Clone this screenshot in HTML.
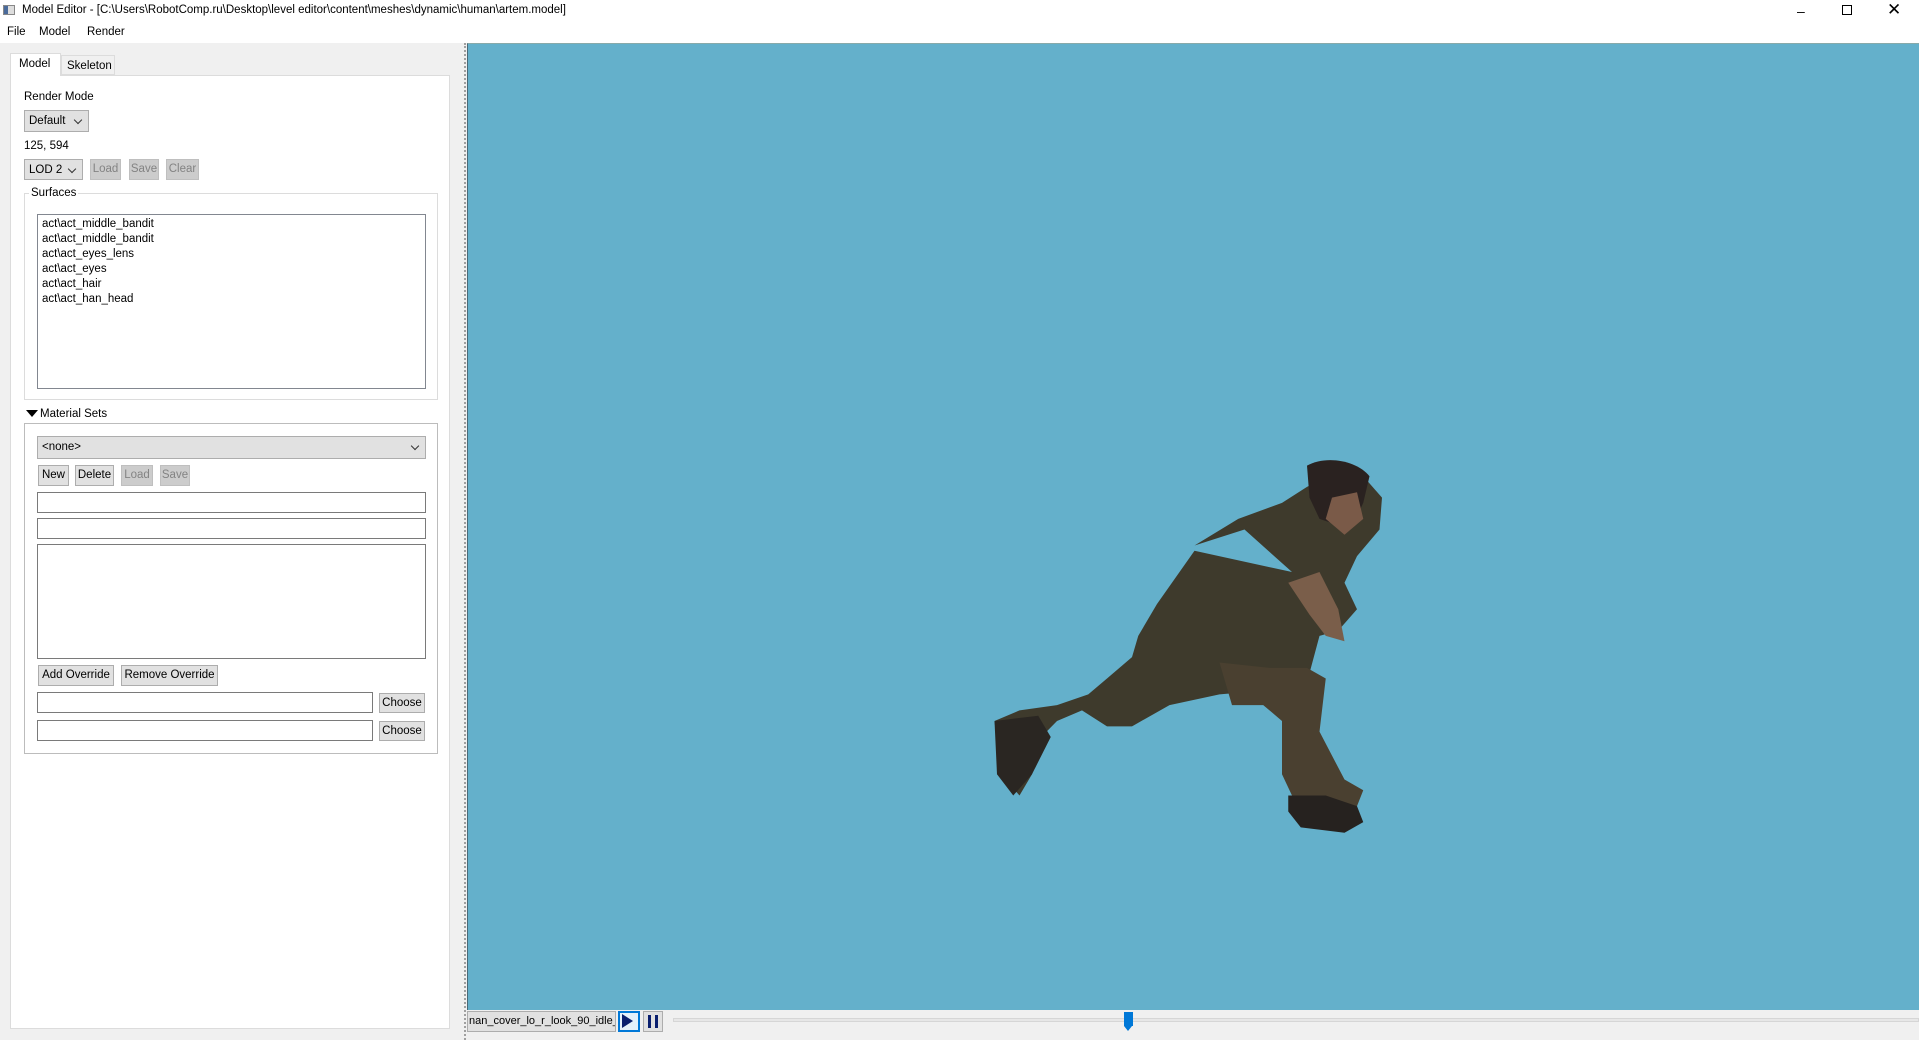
<!DOCTYPE html>
<html><head><style>
*{box-sizing:border-box;margin:0;padding:0}
body{width:1919px;height:1040px;background:#f0f0f0;font-family:"Liberation Sans",sans-serif;font-size:11.5px;color:#000;position:relative;overflow:hidden}
.a{position:absolute}
.btn{position:absolute;background:#e1e1e1;border:1px solid #adadad;text-align:center;line-height:19px}
.dis{background:#cccccc;border-color:#bfbfbf;color:#838383}
.inp{position:absolute;background:#fff;border:1px solid #7a7a7a}
.cb{position:absolute;background:#e1e1e1;border:1px solid #adadad;line-height:20px;padding-left:4px}
.cb:after{content:"";position:absolute;right:7px;top:6px;width:5px;height:5px;border-right:1px solid #333;border-bottom:1px solid #333;transform:rotate(45deg)}
.grp{position:absolute;border:1px solid #dcdcdc}
</style></head><body>
<div class="a" style="left:0;top:0;width:1919px;height:22px;background:#fff"></div>
<div class="a" style="left:3px;top:5px;width:12px;height:10px;border:1px solid #888;background:linear-gradient(90deg,#4a6a9a 40%,#ddd 40%)"></div>
<div class="a" style="left:22px;top:4px">Model Editor - [C:\Users\RobotComp.ru\Desktop\level editor\content\meshes\dynamic\human\artem.model]</div>
<div class="a" style="left:1797px;top:3px;font-size:14px">&#8211;</div>
<div class="a" style="left:1842px;top:5px;width:10px;height:10px;border:1px solid #000"></div>
<div class="a" style="left:1887px;top:0px;font-size:17px">&#10005;</div>
<div class="a" style="left:0;top:22px;width:1919px;height:21px;background:#fff"></div>
<div class="a" style="left:7px;top:26px">File</div>
<div class="a" style="left:39px;top:26px">Model</div>
<div class="a" style="left:87px;top:26px">Render</div>

<div class="a" style="left:10px;top:75px;width:440px;height:954px;background:#fff;border:1px solid #dcdcdc"></div>
<div class="a" style="left:10px;top:53px;width:51px;height:23px;background:#fff;border:1px solid #dcdcdc;border-bottom:none;padding:4px 0 0 8px">Model</div>
<div class="a" style="left:61px;top:55px;width:54px;height:20px;background:#f0f0f0;border:1px solid #dcdcdc;padding:4px 0 0 5px">Skeleton</div>

<div class="a" style="left:24px;top:91px">Render Mode</div>
<div class="cb" style="left:24px;top:110px;width:65px;height:22px">Default</div>
<div class="a" style="left:24px;top:140px">125, 594</div>
<div class="cb" style="left:24px;top:159px;width:59px;height:21px">LOD 2</div>
<div class="btn dis" style="left:90px;top:159px;width:31px;height:21px">Load</div>
<div class="btn dis" style="left:129px;top:159px;width:30px;height:21px">Save</div>
<div class="btn dis" style="left:166px;top:159px;width:33px;height:21px">Clear</div>

<div class="grp" style="left:24px;top:193px;width:414px;height:207px"></div>
<div class="a" style="left:29px;top:187px;background:#fff;padding:0 2px">Surfaces</div>
<div class="inp" style="left:37px;top:214px;width:389px;height:175px;border-color:#828790;padding:2px 4px;line-height:15px">act\act_middle_bandit<br>act\act_middle_bandit<br>act\act_eyes_lens<br>act\act_eyes<br>act\act_hair<br>act\act_han_head</div>

<div class="a" style="left:26px;top:410px;width:0;height:0;border-left:6px solid transparent;border-right:6px solid transparent;border-top:7px solid #000"></div>
<div class="a" style="left:40px;top:408px">Material Sets</div>
<div class="grp" style="left:24px;top:423px;width:414px;height:331px;border-color:#bcbcbc"></div>
<div class="cb" style="left:37px;top:436px;width:389px;height:23px;line-height:21px">&lt;none&gt;</div>
<div class="btn" style="left:38px;top:465px;width:31px;height:21px">New</div>
<div class="btn" style="left:75px;top:465px;width:39px;height:21px">Delete</div>
<div class="btn dis" style="left:121px;top:465px;width:32px;height:21px">Load</div>
<div class="btn dis" style="left:160px;top:465px;width:30px;height:21px">Save</div>
<div class="inp" style="left:37px;top:492px;width:389px;height:21px"></div>
<div class="inp" style="left:37px;top:518px;width:389px;height:21px"></div>
<div class="inp" style="left:37px;top:544px;width:389px;height:115px"></div>
<div class="btn" style="left:38px;top:665px;width:76px;height:21px">Add Override</div>
<div class="btn" style="left:121px;top:665px;width:97px;height:21px">Remove Override</div>
<div class="inp" style="left:37px;top:692px;width:336px;height:21px"></div>
<div class="btn" style="left:379px;top:693px;width:46px;height:20px">Choose</div>
<div class="inp" style="left:37px;top:720px;width:336px;height:21px"></div>
<div class="btn" style="left:379px;top:721px;width:46px;height:20px">Choose</div>

<div class="a" style="left:464px;top:43px;width:0;height:997px;border-left:2px dotted #a0a0a0"></div>
<div class="a" style="left:467px;top:43px;width:1452px;height:967px;background:#64b0cb;border-top:1px solid #8aa;border-left:1px solid #4a6a78"></div>
<svg class="a" style="left:982px;top:455px" width="525" height="415" viewBox="0 0 420 390" preserveAspectRatio="none">
<path d="M248 110 L210 70 L170 85 L205 60 L240 45 L260 30 L285 15 L305 20 L320 40 L318 70 L300 95 L290 120 L300 145 L285 165 L270 170 L262 205 L240 220 L190 225 L150 235 L120 255 L100 255 L80 240 L60 250 L45 268 L40 300 L30 320 L15 300 L10 250 L30 240 L60 235 L85 225 L100 210 L120 190 L125 170 L140 140 L170 90 Z" fill="#3e3a2c"/>
<path d="M190 195 L230 200 L260 200 L275 210 L270 260 L290 305 L305 315 L300 330 L270 335 L250 325 L240 300 L240 250 L225 235 L200 235 Z" fill="#4a4030"/>
<path d="M260 10 C275 0 300 5 310 20 L305 45 L295 70 L270 60 L262 40 Z" fill="#2a2220"/>
<path d="M280 40 L300 35 L305 60 L290 75 L275 60 Z" fill="#7a5a48"/>
<path d="M245 120 L270 110 L285 145 L290 175 L275 170 L262 150 Z" fill="#7a5e4a"/>
<path d="M10 250 L45 245 L55 265 L40 300 L25 320 L12 300 Z" fill="#2a2622"/>
<path d="M245 320 L275 320 L300 330 L305 345 L290 355 L255 350 L245 335 Z" fill="#26221f"/>
</svg>
<div class="a" style="left:467px;top:1010px;width:1452px;height:30px;background:#f0f0f0"></div>
<div class="a" style="left:467px;top:1011px;width:149px;height:21px;background:#e1e1e1;border:1px solid #adadad;line-height:19px;padding-left:1px;overflow:hidden;white-space:nowrap;font-size:11px">nan_cover_lo_r_look_90_idle_</div>
<div class="a" style="left:618px;top:1011px;width:22px;height:21px;border:2px solid #0078d7;background:#e5f1fb"></div>
<div class="a" style="left:622px;top:1014px;width:0;height:0;border-top:7px solid transparent;border-bottom:7px solid transparent;border-left:11px solid #0a1f6e"></div>
<div class="a" style="left:643px;top:1011px;width:20px;height:21px;border:1px solid #adadad;background:#e1e1e1"></div>
<div class="a" style="left:648px;top:1015px;width:3px;height:13px;background:#0a1f6e"></div>
<div class="a" style="left:655px;top:1015px;width:3px;height:13px;background:#0a1f6e"></div>
<div class="a" style="left:673px;top:1018px;width:1246px;height:4px;background:#e7e7e7;border:1px solid #d6d6d6"></div>
<div class="a" style="left:1124px;top:1012px;width:9px;height:14px;background:#0078d7"></div>
<div class="a" style="left:1124px;top:1026px;width:0;height:0;border-left:4.5px solid transparent;border-right:4.5px solid transparent;border-top:5px solid #0078d7"></div>
</body></html>
